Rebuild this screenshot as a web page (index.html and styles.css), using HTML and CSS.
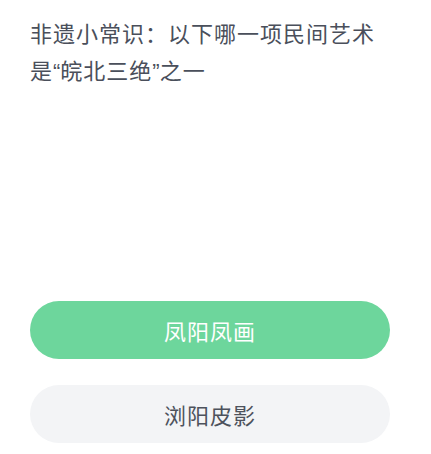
FILE: index.html
```html
<!DOCTYPE html>
<html lang="zh-CN">
<head>
<meta charset="utf-8">
<link rel="stylesheet" href="styles.css">
</head>
<body>
<main class="quiz">
  <p class="question">非遗小常识：以下哪一项民间艺术是<span class="q">“</span>皖北三绝<span class="q">”</span>之一</p>
  <div class="options">
    <div class="option option-selected">凤阳凤画</div>
    <div class="option">浏阳皮影</div>
  </div>
</main>
</body>
</html>
```
FILE: styles.css
```css
html, body {
  margin: 0;
  padding: 0;
  background: #ffffff;
}
.quiz {
  padding: 14px 41px 0 30px;
  font-family: "Noto Sans CJK SC", "Noto Sans", sans-serif;
}
.question {
  margin: 0;
  font-size: 22px;
  line-height: 37px;
  letter-spacing: 1px;
  color: #4a4f5b;
}
.q {
  font-family: "Liberation Sans", sans-serif;
  letter-spacing: 0;
  line-height: 1;
}
.options {
  margin-top: 213px;
  display: flex;
  flex-direction: column;
  gap: 26px;
}
.option {
  height: 58px;
  border-radius: 29px;
  background: #f3f4f6;
  color: #4d525c;
  font-size: 22px;
  letter-spacing: 1px;
  display: flex;
  align-items: center;
  justify-content: center;
}
.option-selected {
  background: #6dd69c;
  color: #ffffff;
}
```
